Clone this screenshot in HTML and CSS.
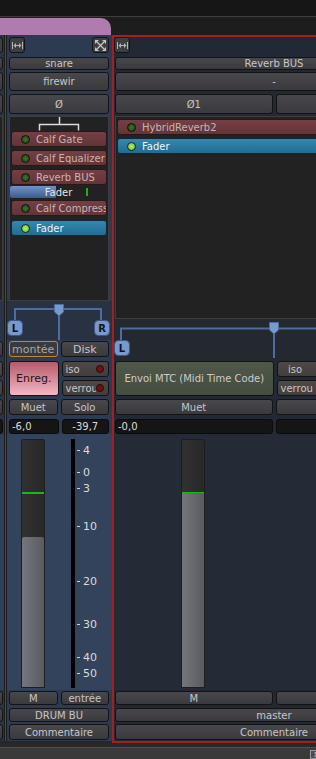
FILE: index.html
```html
<!DOCTYPE html>
<html lang="fr">
  <head>
    <meta charset="UTF-8" />
    <meta name="viewport" content="width=device-width, initial-scale=1.0" />
    <title>Mixer</title>
    <link rel="stylesheet" href="styles.css">
  </head>
  <body>
    <div class="topbar"></div>
    <div class="tabbar"><div class="tab"></div></div>

    <div class="strips">
      <!-- strip cut off by the window's left edge -->
      <div class="edge">
        <div class="edge-col">
          <div class="hdr"><span class="hbtn"></span></div>
          <div class="btn name"></div>
          <div class="btn input"></div>
          <div class="row phase"><span class="btn"></span></div>
          <div class="procbox"><div class="proc blue edge-fader"></div></div>
          <div class="pan-space"></div>
          <div class="row mode"><span class="btn"></span></div>
          <div class="row rec">
            <div class="stack"><span class="btn iso"></span><span class="btn iso"></span></div>
          </div>
          <div class="row mute"><span class="btn"></span></div>
          <div class="row disp"><span class="display"></span></div>
          <div class="meter"></div>
          <div class="row mrow"><span class="btn"></span></div>
          <div class="btn sname"></div>
          <div class="btn cmt"></div>
        </div>
      </div>
      <div class="divider"></div>

      <div class="strip snare">
        <div class="hdr">
          <span class="hbtn">
            <svg width="11" height="7" viewBox="0 0 11 7"><path d="M0.5 0v7M10.5 0v7M3 3.5h5" stroke="#b4b4b4" fill="none"/><path d="M1.5 3.5L4 1v5zM9.5 3.5L7 1v5z" fill="#b4b4b4"/></svg>
          </span>
          <span class="hbtn close">
            <svg width="11" height="11" viewBox="0 0 11 11"><path d="M2 2L9 9M9 2L2 9" stroke="#c4c4c4" stroke-width="1.3"/><path d="M0 0h4L0 4zM11 0v4L7 0zM0 11v-4L4 11zM11 11h-4L11 7z" fill="#c4c4c4"/></svg>
          </span>
        </div>
        <div class="btn name">snare</div>
        <div class="btn input">firewir</div>
        <div class="row phase"><span class="btn">Ø</span></div>
        <div class="procbox">
          <svg class="route" width="98" height="14"><path d="M49.5 0v7.5M29.5 13.5v-6h39v6" stroke="#dcdcdc" fill="none" stroke-width="1.5"/></svg>
          <div class="proc red"><span class="led"></span><span class="ptxt">Calf Gate</span></div>
          <div class="proc red"><span class="led"></span><span class="ptxt">Calf Equalizer 5 Band</span></div>
          <div class="proc red"><span class="led"></span><span class="ptxt">Reverb BUS</span></div>
          <div class="pfader">
            <span class="lvl" style="width: 46px"></span>
            <span class="peak"></span>
            <span class="ftxt">Fader</span>
          </div>
          <div class="proc red"><span class="led"></span><span class="ptxt">Calf Compressor</span></div>
          <div class="proc blue last"><span class="led on"></span><span class="ptxt">Fader</span></div>
        </div>
        <svg class="pan" width="105" height="39" viewBox="0 0 105 39">
          <path d="M8 20V8H94V20M52 14V39" stroke="#4d6ca0" stroke-width="2" fill="none"/>
          <path d="M47.5 3.5h9v7.5l-4.5 4l-4.5-4z" fill="#7899cc" stroke="#4d6ca0"/>
          <rect x="0.5" y="19.5" width="15" height="15" rx="4" fill="#7899cc" stroke="#3c5888"/>
          <text x="8" y="31" class="badge">L</text>
          <rect x="87.5" y="19.5" width="15" height="15" rx="4" fill="#7899cc" stroke="#3c5888"/>
          <text x="95" y="31" class="badge">R</text>
        </svg>
        <div class="row mode"><span class="btn armed big">montée</span><span class="btn big">Disk</span></div>
        <div class="row rec">
          <span class="btn recbtn big">Enreg.</span>
          <div class="stack">
            <span class="btn iso"><span class="lbl">iso</span><span class="rled"></span></span>
            <span class="btn iso"><span class="lbl">verrou</span><span class="rled"></span></span>
          </div>
        </div>
        <div class="row mute"><span class="btn">Muet</span><span class="btn">Solo</span></div>
        <div class="row disp"><span class="display">-6,0</span><span class="display center">-39,7</span></div>
        <div class="meter">
          <div class="fader"><span class="zero"></span><span class="fill" style="height: 150px"></span></div>
          <div class="meterbar"></div>
          <div class="scale">
            <span class="tick" style="top: 5px">4</span>
            <span class="tick" style="top: 27px">0</span>
            <span class="tick" style="top: 43px">3</span>
            <span class="tick" style="top: 81px">10</span>
            <span class="tick" style="top: 136px">20</span>
            <span class="tick" style="top: 179px">30</span>
            <span class="tick" style="top: 212px">40</span>
            <span class="tick" style="top: 228px">50</span>
          </div>
        </div>
        <div class="row mrow"><span class="btn">M</span><span class="btn">entrée</span></div>
        <div class="btn sname">DRUM BU</div>
        <div class="btn cmt">Commentaire</div>
      </div>

      <div class="strip master">
        <div class="hdr">
          <span class="hbtn">
            <svg width="11" height="7" viewBox="0 0 11 7"><path d="M0.5 0v7M10.5 0v7M3 3.5h5" stroke="#b4b4b4" fill="none"/><path d="M1.5 3.5L4 1v5zM9.5 3.5L7 1v5z" fill="#b4b4b4"/></svg>
          </span>
        </div>
        <div class="btn name">Reverb BUS</div>
        <div class="btn input">-</div>
        <div class="row phase"><span class="btn">Ø1</span><span class="btn"></span></div>
        <div class="procbox">
          <div class="proc red"><span class="led"></span><span class="ptxt">HybridReverb2</span></div>
          <div class="proc blue"><span class="led on"></span><span class="ptxt">Fader</span></div>
        </div>
        <svg class="pan" width="320" height="42" viewBox="0 0 320 42">
          <path d="M7 22V9.5H320M160 15V39" stroke="#4d6ca0" stroke-width="2" fill="none"/>
          <path d="M155.5 3.5h9v7.5l-4.5 4l-4.5-4z" fill="#7899cc" stroke="#4d6ca0"/>
          <rect x="0.5" y="21.5" width="15" height="15" rx="4" fill="#7899cc" stroke="#3c5888"/>
          <text x="8" y="33" class="badge">L</text>
        </svg>
        <div class="row rec">
          <span class="btn mtc">Envoi MTC (Midi Time Code)</span>
          <div class="stack">
            <span class="btn iso"><span class="lbl">iso</span><span class="rled"></span></span>
            <span class="btn iso"><span class="lbl">verrou</span><span class="rled"></span></span>
          </div>
        </div>
        <div class="row mute"><span class="btn">Muet</span><span class="btn"></span></div>
        <div class="row disp"><span class="display">-0,0</span><span class="display"></span></div>
        <div class="meter">
          <div class="fader"><span class="zero"></span><span class="fill" style="height: 194px"></span></div>
        </div>
        <div class="row mrow"><span class="btn">M</span><span class="btn"></span></div>
        <div class="btn sname">master</div>
        <div class="btn cmt">Commentaire</div>
      </div>
    </div>

    <div class="bottombar"><span class="mini">x</span></div>
  </body>
</html>
```

FILE: styles.css
```css
* {
  box-sizing: border-box;
}
body {
  margin: 0;
  width: 316px;
  height: 759px;
  overflow: hidden;
  background-color: #1d1d1d;
  color: #c6c6c6;
  font-family: "DejaVu Sans", Verdana, sans-serif;
  font-size: 10px;
}
.topbar {
  height: 17px;
  background-color: #161616;
  border-bottom: 1px solid #3c3c3c;
}
.tabbar {
  height: 18px;
  padding-top: 1px;
}
.tab {
  width: 111px;
  height: 17px;
  background-color: #b07bae;
  border-top-right-radius: 10px;
}

/* strips */
.strips {
  display: flex;
  align-items: flex-start;
  width: 900px;
  height: 708px;
  background-color: #262626;
}
.edge {
  width: 4px;
  height: 706px;
  overflow: hidden;
  background-color: #29344a;
}
.edge-col {
  width: 40px;
  margin-left: -36px;
  padding-right: 1px;
  display: flex;
  flex-direction: column;
}
.edge .hdr {
  justify-content: flex-end;
}
.edge .meter {
  background-color: #30405a;
  margin-right: -1px;
}
.edge-fader {
  margin-top: 21px !important;
}
.pan-space {
  height: 39px;
}
.divider {
  width: 3px;
  height: 706px;
  background: linear-gradient(to right, #1c1c1c 1px, #4a4a4a 1px, #4a4a4a 2px, #1c1c1c 2px);
}
.strip {
  display: flex;
  flex-direction: column;
  flex: none;
}
.snare {
  width: 105px;
  height: 706px;
  padding: 0 3px 0 2px;
  background-color: #2c3a52;
}
.master {
  width: 324px;
  height: 708px;
  padding: 0 1px;
  border: 2px solid #a81e1e;
  background-color: #232934;
}

/* header */
.hdr {
  display: flex;
  justify-content: space-between;
  height: 21px;
  padding-top: 2px;
}
.master .hdr {
  height: 19px;
  padding-top: 0;
  margin-left: -1px;
}
.hbtn {
  width: 16px;
  height: 16px;
  border: 1px solid #141414;
  border-radius: 3px;
  background-color: #3c3e42;
  display: flex;
  align-items: center;
  justify-content: center;
}
.hbtn.close {
  width: 17px;
}

/* buttons */
.btn {
  display: flex;
  align-items: center;
  justify-content: center;
  border: 1px solid #131313;
  border-radius: 3px;
  background: linear-gradient(#48484c, #3a3a3e);
  white-space: nowrap;
  overflow: hidden;
}
.big {
  font-size: 11px;
}
.row {
  display: flex;
  gap: 3px;
}
.row > * {
  flex: 1 1 0;
  min-width: 0;
}
.name {
  height: 13px;
  margin-top: 1px;
}
.input {
  height: 19px;
  margin-top: 2px;
}
.phase {
  height: 20px;
  margin-top: 3px;
}
.mode {
  height: 16px;
  margin-top: 1px;
}
.rec {
  height: 35px;
  margin-top: 4px;
}
.master .rec {
  margin-top: 0;
}
.mute {
  height: 16px;
  margin-top: 3px;
}
.disp {
  height: 15px;
  margin-top: 4px;
}
.mrow {
  height: 14px;
  margin-top: 1px;
}
.sname {
  height: 14px;
  margin-top: 3px;
}
.cmt {
  height: 16px;
  margin-top: 2px;
}
.armed {
  border-color: #c4862c;
  background: #3a3a3c;
  color: #a8a8a8;
}
.recbtn {
  background: linear-gradient(#b55a6b, #f4b7c3);
  color: #221616;
}
.mtc {
  background: linear-gradient(#50584a, #454c40);
  color: #cbcbcb;
}
.stack {
  display: flex;
  flex-direction: column;
  gap: 3px;
}
.stack .btn {
  height: 16px;
}
.iso {
  justify-content: flex-start;
  padding: 0 4px 0 3px;
  background: linear-gradient(#4e4848, #433e3e);
}
.iso .lbl {
  flex: 1;
  min-width: 0;
  overflow: hidden;
}
.master .iso .lbl {
  flex: none;
  width: 29px;
  overflow: visible;
  text-align: center;
}
.rled {
  flex: none;
  width: 8px;
  height: 8px;
  border-radius: 50%;
  background-color: #7d0c0c;
  border: 1px solid #1a1010;
  margin-left: auto;
}
.display {
  display: flex;
  align-items: center;
  padding-left: 2px;
  background-color: #151515;
  border: 1px solid #0b0b0b;
  border-radius: 3px;
  color: #dcdcdc;
}
.display.center {
  justify-content: center;
  padding-left: 0;
}

/* processor box */
.procbox {
  margin-top: 2px;
  height: 185px;
  background-color: #222222;
  border: 1px solid #3e3e3e;
  overflow: hidden;
}
.master .procbox {
  height: 203px;
}
.route {
  display: block;
}
.proc {
  display: flex;
  align-items: center;
  gap: 6px;
  height: 16px;
  margin: 3px 1px 0;
  padding-left: 9px;
  border-radius: 3px;
  white-space: nowrap;
  overflow: hidden;
}
.route + .proc {
  margin-top: 0;
}
.master .proc:first-child {
  margin-top: 2px;
}
.proc.last {
  margin-top: 4px;
}
.proc.red {
  background: linear-gradient(#733f44, #633438);
  border: 1px solid #2a1818;
  color: #c9b3b3;
}
.proc.blue {
  background: linear-gradient(#3388b0, #246b90);
  border: 1px solid #12283a;
  color: #eef4f8;
}
.led {
  flex: none;
  width: 9px;
  height: 9px;
  border-radius: 50%;
  background: radial-gradient(circle, #3a7424 0, #2a561a 60%, #14200e 100%);
  border: 1px solid #101010;
}
.led.on {
  background: radial-gradient(circle, #b4f070 0, #86d044 60%, #4c8a24 100%);
  border-color: #1c2a14;
}
.pfader {
  position: relative;
  height: 12px;
  margin: 1px 1px 0 0;
  display: flex;
  align-items: center;
  justify-content: center;
  color: #e6e6e6;
}
.pfader + .proc {
  margin-top: 2px;
}
.lvl {
  position: absolute;
  left: 0;
  top: 0;
  bottom: 0;
  background: linear-gradient(#7192c6, #3b5b8e);
  border-radius: 2px 0 0 2px;
}
.peak {
  position: absolute;
  left: 76px;
  top: 2px;
  width: 2px;
  height: 8px;
  background-color: #1fae1f;
}
.ftxt {
  position: relative;
}

/* panner */
.pan {
  display: block;
  flex: none;
}
.snare .pan {
  margin: 0 -3px 0 -2px;
  background-color: #283243;
}
.master .pan {
  margin: 0 -1px;
  background-color: #24292f;
}
.badge {
  font-family: "DejaVu Sans", sans-serif;
  font-size: 10px;
  font-weight: bold;
  fill: #0f1520;
  text-anchor: middle;
}

/* fader and meter */
.meter {
  display: flex;
  height: 256px;
  padding-top: 5px;
}
.snare .meter {
  margin: 0 -3px 0 -2px;
  padding-left: 14px;
  background-color: #33435c;
}
.master .meter {
  margin: 0 -1px;
  padding-left: 67px;
  background-color: #252b36;
}
.fader {
  position: relative;
  width: 24px;
  height: 249px;
  background: linear-gradient(to right, #313131, #282828);
  border: 1px solid #1e1e1e;
  border-radius: 2px 2px 0 0;
}
.fill {
  position: absolute;
  left: 0;
  right: 0;
  bottom: 0;
  background: linear-gradient(to right, #75757c, #5a5a61);
  border-radius: 2px 2px 0 0;
}
.zero {
  position: absolute;
  left: 0;
  right: 0;
  top: 52px;
  height: 2px;
  background-color: #1db41d;
}
.meterbar {
  width: 4px;
  height: 249px;
  margin-left: 26px;
  background-color: #000;
}
.scale {
  position: relative;
  width: 30px;
  height: 249px;
}
.tick {
  position: absolute;
  left: 2px;
  height: 12px;
  display: flex;
  align-items: center;
  font-size: 11px;
  color: #dadada;
}
.tick::before {
  content: "";
  width: 3px;
  height: 1px;
  margin-right: 3px;
  background-color: #d0d0d0;
}

/* bottom */
.bottombar {
  display: flex;
  justify-content: flex-end;
  height: 16px;
  padding-top: 7px;
  background: linear-gradient(#282828 0, #282828 4px, #505050 4px, #505050 5px, #3a3a3a 5px);
}
.mini {
  width: 8px;
  height: 9px;
  margin-right: -2px;
  padding-left: 3px;
  background-color: #4e4e4e;
  border: 1px solid #9a9a9a;
  border-right: none;
  color: #e0e0e0;
  font-size: 8px;
  line-height: 7px;
  overflow: hidden;
}
```
